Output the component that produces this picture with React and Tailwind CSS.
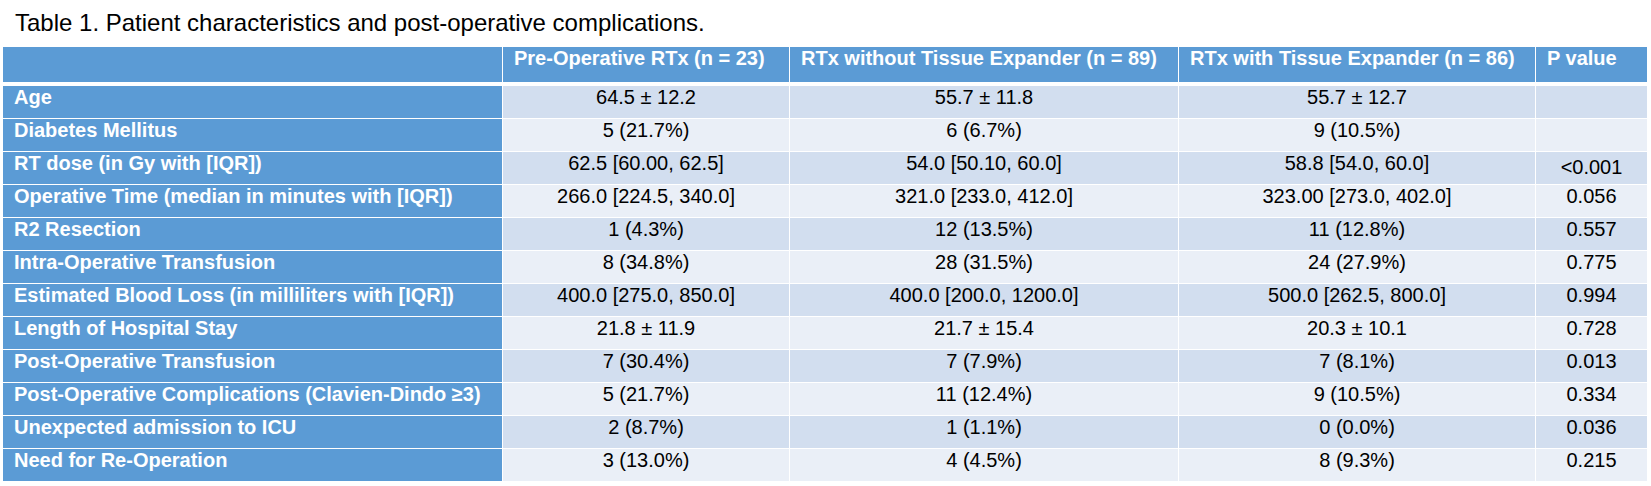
import React from "react";

const header = [
  "",
  "Pre-Operative RTx (n = 23)",
  "RTx without Tissue Expander (n = 89)",
  "RTx with Tissue Expander (n = 86)",
  "P value",
];

const rows = [
  ["Age", "64.5 ± 12.2", "55.7 ± 11.8", "55.7 ± 12.7", ""],
  ["Diabetes Mellitus", "5 (21.7%)", "6 (6.7%)", "9 (10.5%)", ""],
  ["RT dose (in Gy with [IQR])", "62.5 [60.00, 62.5]", "54.0 [50.10, 60.0]", "58.8 [54.0, 60.0]", "<0.001"],
  ["Operative Time (median in minutes with [IQR])", "266.0 [224.5, 340.0]", "321.0 [233.0, 412.0]", "323.00 [273.0, 402.0]", "0.056"],
  ["R2 Resection", "1 (4.3%)", "12 (13.5%)", "11 (12.8%)", "0.557"],
  ["Intra-Operative Transfusion", "8 (34.8%)", "28 (31.5%)", "24 (27.9%)", "0.775"],
  ["Estimated Blood Loss (in milliliters with [IQR])", "400.0 [275.0, 850.0]", "400.0 [200.0, 1200.0]", "500.0 [262.5, 800.0]", "0.994"],
  ["Length of Hospital Stay", "21.8 ± 11.9", "21.7 ± 15.4", "20.3 ± 10.1", "0.728"],
  ["Post-Operative Transfusion", "7 (30.4%)", "7 (7.9%)", "7 (8.1%)", "0.013"],
  ["Post-Operative Complications (Clavien-Dindo ≥3)", "5 (21.7%)", "11 (12.4%)", "9 (10.5%)", "0.334"],
  ["Unexpected admission to ICU", "2 (8.7%)", "1 (1.1%)", "0 (0.0%)", "0.036"],
  ["Need for Re-Operation", "3 (13.0%)", "4 (4.5%)", "8 (9.3%)", "0.215"],
];

const widths = ["w-[499px]", "w-[286px]", "w-[388px]", "w-[356px]", "w-[111px]"];

export default function App() {
  return (
    <div
      className="w-[1651px] h-[486px] bg-white overflow-hidden"
      style={{ fontFamily: '"Liberation Sans", Arial, sans-serif' }}
    >
      <div className="pl-[15px] pt-[9px] h-[47px] text-[24px] leading-[28px] text-black">
        Table 1. Patient characteristics and post-operative complications.
      </div>
      <div className="ml-[3px] w-[1644px] flex flex-col bg-white">
        <div className="flex gap-px h-[35px]">
          {header.map((h, i) => (
            <div
              key={i}
              className={`${widths[i]} bg-[#5B9BD5] text-white font-bold text-[20px] leading-[20px] pl-[11px] pt-[1px] whitespace-nowrap`}
            >
              {h}
            </div>
          ))}
        </div>
        <div className="h-[4px]" />
        <div className="flex flex-col gap-px">
          {rows.map((r, ri) => (
            <div key={ri} className="flex gap-px h-[32px]">
              {r.map((c, ci) =>
                ci === 0 ? (
                  <div
                    key={ci}
                    className={`${widths[0]} bg-[#5B9BD5] text-white font-bold text-[20px] leading-[20px] pl-[11px] pt-[1px] whitespace-nowrap`}
                  >
                    {c}
                  </div>
                ) : (
                  <div
                    key={ci}
                    className={`${widths[ci]} ${
                      ri % 2 === 0 ? "bg-[#D2DEEF]" : "bg-[#EAEFF7]"
                    } text-black text-[20px] leading-[20px] text-center whitespace-nowrap ${
                      ri === 2 && ci === 4 ? "pt-[5px]" : "pt-[1px]"
                    }`}
                  >
                    {c}
                  </div>
                )
              )}
            </div>
          ))}
        </div>
      </div>
    </div>
  );
}
